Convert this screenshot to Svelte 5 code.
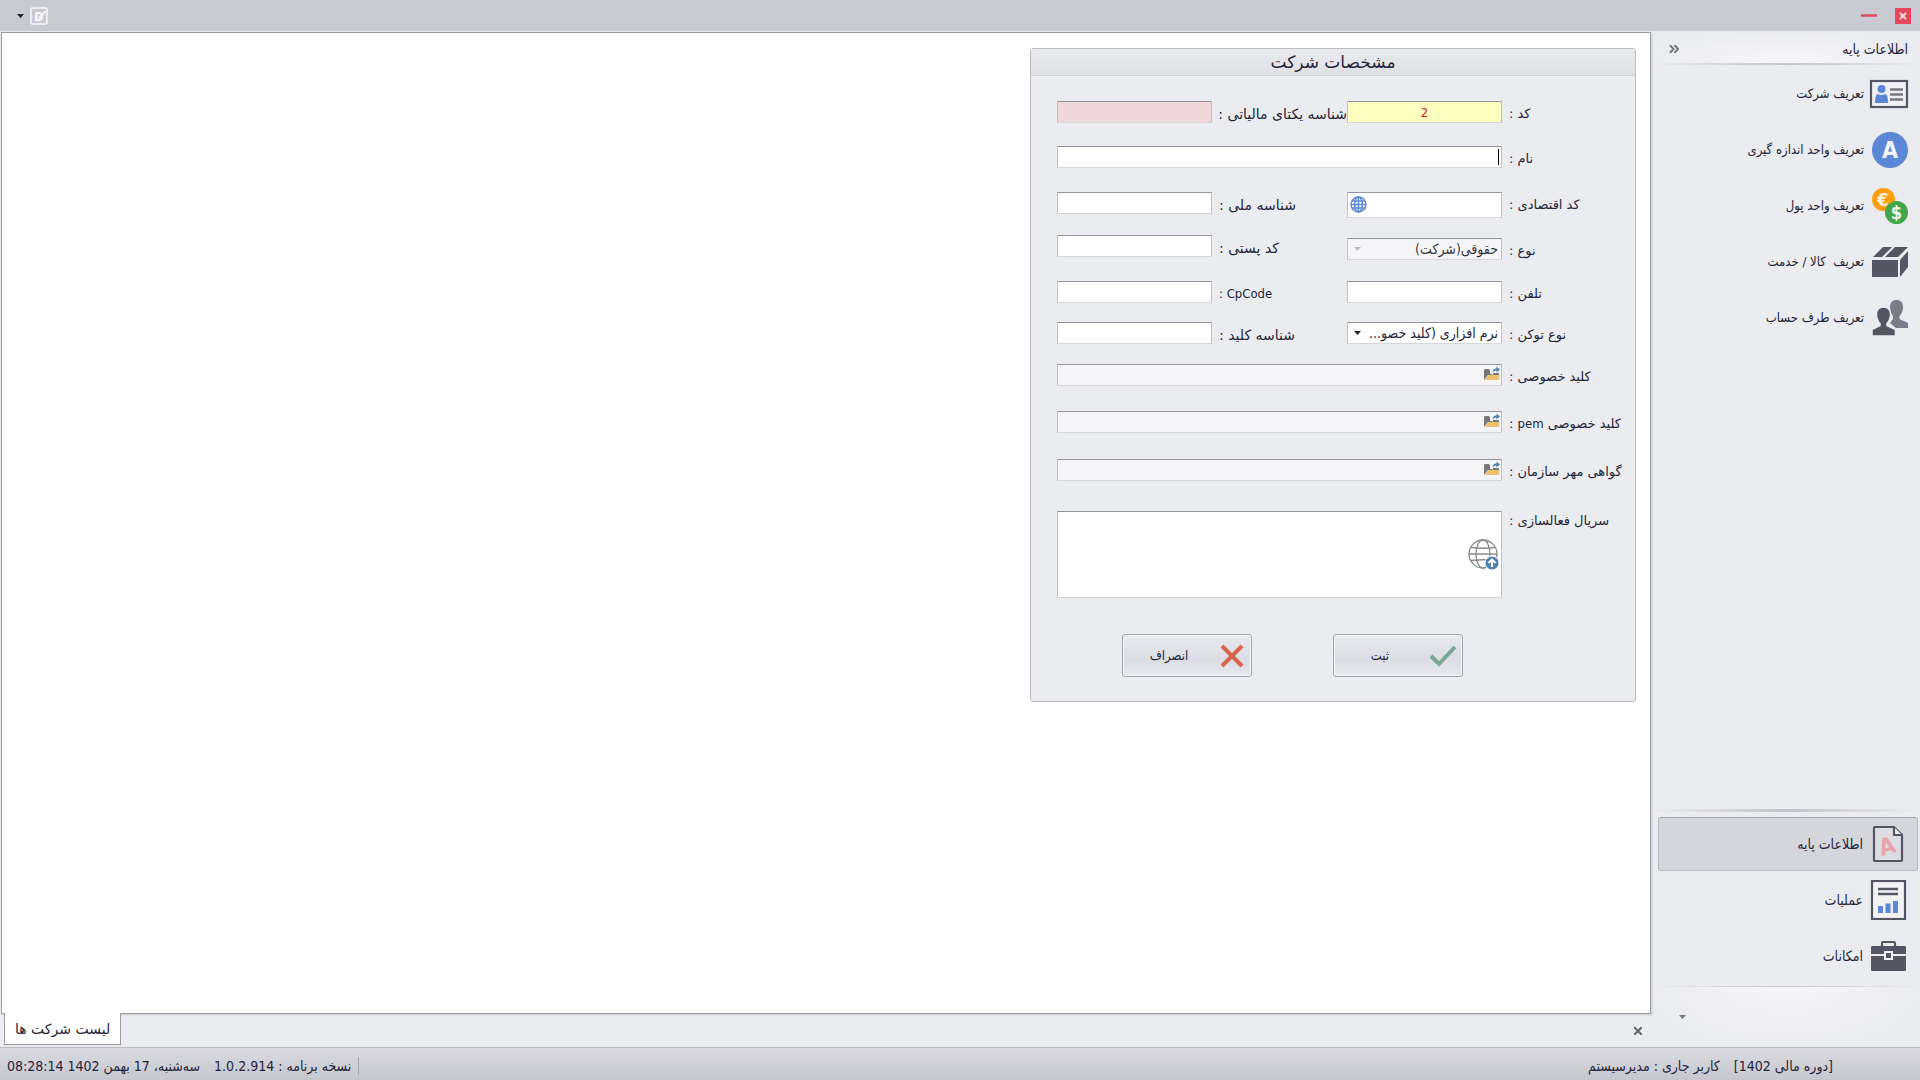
<script lang="ts">
	type Item = { label: string; icon: string };

	const baseItems: Item[] = [
		{ label: 'تعریف شرکت', icon: 'card' },
		{ label: 'تعریف واحد اندازه گیری', icon: 'unit' },
		{ label: 'تعریف واحد پول', icon: 'money' },
		{ label: 'تعریف \u00a0کالا / خدمت', icon: 'box' },
		{ label: 'تعریف طرف حساب', icon: 'people' }
	];

	const groups: Item[] = [
		{ label: 'اطلاعات پایه', icon: 'doc' },
		{ label: 'عملیات', icon: 'report' },
		{ label: 'امکانات', icon: 'case' }
	];

	let activeGroup = 'doc';
	let code = '2';
	let taxId = '';
	let name = '';
	let economicCode = '';
	let nationalId = '';
	let postalCode = '';
	let phone = '';
	let cpCode = '';
	let keyId = '';
	let serial = '';
</script>

{#snippet icon(id: string)}
	<svg class="icon" viewBox="0 0 40 40" aria-hidden="true">
		{#if id === 'card'}
			<rect x="2" y="7" width="36" height="26" fill="#f1f1f5" stroke="#555663" stroke-width="2.2" />
			<circle cx="12.5" cy="15" r="4" fill="#5b87d6" />
			<path d="M6 29q0-8 2.500-9 4 2 8 0 2.500 1 2.500 9z" fill="#5b87d6" />
			<path d="M21 15.500h13M21 20.500h13M21 25.500h13" stroke="#777884" stroke-width="2.4" />
		{:else if id === 'unit'}
			<circle cx="21" cy="20" r="18" fill="#5b87d6" />
			<text x="21" y="28" text-anchor="middle" font-size="23" font-weight="700" fill="#f4f6fb">A</text>
		{:else if id === 'money'}
			<circle cx="14.5" cy="13.5" r="11.5" fill="#ff9f10" />
			<text x="14" y="20" text-anchor="middle" font-size="18" font-weight="700" fill="#fff3df">€</text>
			<circle cx="27.5" cy="26.5" r="11.5" fill="#43a64c" />
			<text x="27.5" y="33" text-anchor="middle" font-size="18" font-weight="700" fill="#f2fbf2">$</text>
		{:else if id === 'box'}
			<path d="M3 18h26v17H3z" fill="#555663" />
			<path d="M31 18l8-9v16l-8 10z" fill="#555663" />
			<path d="M4 15L14 5h9L13 15zM16 15L26 5h13L29 15z" fill="#555663" />
		{:else if id === 'people'}
			<path d="M27.500 2c4 0 6.500 2.500 6.500 7 0 4-1.500 7-3.500 9v3l8.500 4v5H27l-6-5 3-4v-3c-2-2-3-5-3-9 0-4.500 2.500-7 6.500-7z" fill="#7b7c87" />
			<path d="M14.500 9c4.500 0 7 3 7 7.500 0 4-1.500 7-3.500 9v2l8.500 4V38H3v-6.500l8-4v-2c-2-2-3.500-5-3.500-9C7.500 12 10 9 14.500 9z" fill="#555663" stroke="#ebecf0" stroke-width="1.5" />
		{:else if id === 'doc'}
			<path d="M7 3h19l8 8v25q0 1-1 1H7q-1 0-1-1V4q0-1 1-1z" fill="#dcdce1" stroke="#555663" stroke-width="2.2" />
			<path d="M26 3v8h8" fill="#f0f0f3" stroke="#555663" stroke-width="2.2" />
			<text x="19" y="30" text-anchor="middle" font-size="23" font-weight="700" fill="#e8a3ae" transform="rotate(-16 19 22)">A</text>
		{:else if id === 'report'}
			<rect x="4" y="1" width="33" height="38" fill="#f3f3f6" stroke="#555663" stroke-width="2.2" />
			<path d="M10 9h20M10 14h20" stroke="#555663" stroke-width="2.4" />
			<path d="M10 26h5v7h-5zM17.500 23.500h5V33h-5zM25 21h5v12h-5z" fill="#5b87d6" />
		{:else if id === 'case'}
			<path d="M14 11V7.200q0-1.200 1-1.200h11q1 0 1 1.200V11" fill="none" stroke="#555663" stroke-width="2.2" />
			<path d="M4 10h33q1 0 1 1.500V18H3v-6.500Q3 10 4 10zM3 20h35v14q0 1-1 1H4q-1 0-1-1z" fill="#555663" />
			<rect x="16" y="15" width="9" height="9" fill="#f3f3f6" />
			<rect x="18" y="17" width="5" height="5" fill="#555663" />
		{/if}
	</svg>
{/snippet}

{#snippet folder()}
	<svg width="16" height="16" viewBox="0 0 16 16" aria-hidden="true">
		<path d="M0 4l1-1h4l1 1.500V8h3l-1 1H4l-4 5z" fill="#777" />
		<path d="M9 7h6v2H9z" fill="#777" />
		<path d="M4.500 9H16l-1.500 5H1z" fill="#edc06c" />
		<path d="M8.500 6.500C8.500 4 10 2.500 12.500 2.500V.500L16 3.500l-3.500 3v-2C11 4.500 10 5 8.500 6.500z" fill="#4e80b3" />
	</svg>
{/snippet}

<div class="app" dir="rtl">
	<header class="titlebar">
		<button class="close" aria-label="بستن">
			<svg width="16" height="16" viewBox="0 0 16 16"><rect width="16" height="16" fill="#e8475f" /><path d="M5 5l6 6M11 5l-6 6" stroke="#fbdde2" stroke-width="2" /></svg>
		</button>
		<button class="minimize" aria-label="کوچک کردن">
			<svg width="16" height="16" viewBox="0 0 16 16"><path d="M1 7.500h14" stroke="#e04a60" stroke-width="2.6" stroke-linecap="round" /></svg>
		</button>
		<span class="fill"></span>
		<svg width="18" height="18" viewBox="0 0 18 18" aria-hidden="true">
			<rect x="1" y="1" width="16" height="16" rx="1" fill="none" stroke="#f7f7fb" stroke-width="1.5" />
			<text x="4" y="14" font-size="13" font-weight="700" fill="#f7f7fb" direction="ltr">D</text>
			<path d="M9 11l7-7" stroke="#f7f7fb" stroke-width="2" />
		</svg>
		<button class="quick" aria-label="منو">
			<svg width="7" height="4" viewBox="0 0 7 4"><path d="M0 0h7L3.500 4z" fill="#222231" /></svg>
		</button>
	</header>

	<div class="main">
		<aside class="sidebar">
			<div class="side-head">
				<span>اطلاعات پایه</span>
				<button aria-label="جمع کردن">
					<svg width="10" height="8" viewBox="0 0 10 8"><path d="M1 0l3.500 4L1 8M5.500 0L9 4 5.500 8" fill="none" stroke="#777782" stroke-width="2" /></svg>
				</button>
			</div>
			<nav class="items">
				{#each baseItems as item}
					<button class="item">{@render icon(item.icon)}<span>{item.label}</span></button>
				{/each}
			</nav>
			<nav class="groups">
				{#each groups as item}
					<button class="item" class:active={item.icon === activeGroup} on:click={() => (activeGroup = item.icon)}>
						{@render icon(item.icon)}<span>{item.label}</span>
					</button>
				{/each}
			</nav>
			<div class="side-foot">
				<button aria-label="بیشتر">
					<svg width="7" height="4" viewBox="0 0 7 4"><path d="M0 0h7L3.500 4z" fill="#777782" /></svg>
				</button>
			</div>
		</aside>

		<div class="content">
			<main class="workspace">
				<form class="panel" on:submit|preventDefault>
					<h1>مشخصات شرکت</h1>
					<div class="fields">
						<label for="code">کد :</label>
						<input id="code" class="box code" bind:value={code} />
						<label class="second" for="tax">شناسه یکتای مالیاتی :</label>
						<input id="tax" class="box required" bind:value={taxId} />

						<label for="name">نام :</label>
						<div class="field wide">
							<input id="name" class="box" bind:value={name} />
							<span class="caret"></span>
						</div>

						<label for="economic">کد اقتصادی :</label>
						<div class="field">
							<input id="economic" class="box tall" bind:value={economicCode} />
							<svg class="globe" width="17" height="17" viewBox="0 0 17 17" aria-hidden="true">
								<g fill="none" stroke="#5b87d6" stroke-width="1.4">
									<circle cx="8.5" cy="8.5" r="7.5" />
									<ellipse cx="8.5" cy="8.5" rx="3.8" ry="7.5" />
									<path d="M8.500 1v15M1 8.500h15M2 5h13M2 12h13" />
								</g>
							</svg>
						</div>
						<label class="second" for="national">شناسه ملی :</label>
						<input id="national" class="box" bind:value={nationalId} />

						<label class="low" for="kind">نوع :</label>
						<div class="field low">
							<select id="kind" class="box" disabled><option>حقوقی(شرکت)</option></select>
							<svg class="arrow" width="7" height="4" viewBox="0 0 7 4"><path d="M0 0h7L3.500 4z" fill="#bbbbc2" /></svg>
						</div>
						<label class="second" for="postal">کد پستی :</label>
						<input id="postal" class="box" bind:value={postalCode} />

						<label for="phone">تلفن :</label>
						<input id="phone" class="box" bind:value={phone} />
						<label class="latin" for="cp">CpCode :</label>
						<input id="cp" class="box" bind:value={cpCode} />

						<label for="token">نوع توکن :</label>
						<div class="field">
							<select id="token" class="box"><option>نرم افزاری (کلید خصو...</option></select>
							<svg class="arrow" width="7" height="4" viewBox="0 0 7 4"><path d="M0 0h7L3.500 4z" fill="#222231" /></svg>
						</div>
						<label class="second" for="key">شناسه کلید :</label>
						<input id="key" class="box" bind:value={keyId} />

						<label for="private">کلید خصوصی :</label>
						<div class="field wide">
							<input id="private" class="box" disabled />
							<button type="button" class="browse" aria-label="انتخاب فایل">{@render folder()}</button>
						</div>

						<label for="pem">کلید خصوصی <span class="latin">pem</span> :</label>
						<div class="field wide">
							<input id="pem" class="box" disabled />
							<button type="button" class="browse" aria-label="انتخاب فایل">{@render folder()}</button>
						</div>

						<label for="stamp">گواهی مهر سازمان :</label>
						<div class="field wide">
							<input id="stamp" class="box" disabled />
							<button type="button" class="browse" aria-label="انتخاب فایل">{@render folder()}</button>
						</div>

						<label class="top" for="serial">سریال فعالسازی :</label>
						<div class="field wide">
							<textarea id="serial" class="box" bind:value={serial}></textarea>
							<button type="button" class="upload" aria-label="دریافت سریال">
								<svg width="32" height="32" viewBox="0 0 32 32">
									<g fill="none" stroke="#8a8a8a" stroke-width="1.3">
										<circle cx="15" cy="15" r="14" />
										<ellipse cx="15" cy="15" rx="7" ry="14" />
										<path d="M1 15h28M3 8.500q12 1.500 24 0M3 21.500q12-1.500 24 0" />
									</g>
									<circle cx="24" cy="24" r="7" fill="#4e80b3" stroke="#fff" stroke-width="1" />
									<path d="M24 28v-7M20.500 24l3.500-3.500 3.500 3.500" fill="none" stroke="#fff" stroke-width="2" />
								</svg>
							</button>
						</div>
					</div>
					<div class="actions">
						<button type="submit">
							<svg width="28" height="28" viewBox="0 0 28 28"><path d="M2 14l8 8L26 5" fill="none" stroke="#78a797" stroke-width="4" /></svg>
							<span>ثبت</span>
						</button>
						<button type="button">
							<svg width="28" height="28" viewBox="0 0 28 28"><path d="M4 4l20 20M24 4L4 24" fill="none" stroke="#d9664a" stroke-width="4" /></svg>
							<span>انصراف</span>
						</button>
					</div>
				</form>
			</main>
			<div class="tabs">
				<button class="tab-close" aria-label="بستن تب">
					<svg width="8" height="8" viewBox="0 0 8 8"><path d="M0 0l8 8M8 0L0 8" stroke="#666672" stroke-width="2" /></svg>
				</button>
				<button class="tab">لیست شرکت ها</button>
			</div>
		</div>
	</div>

	<footer class="status">
		<span>[دوره مالی 1402]</span>
		<span>کاربر جاری : مدیرسیستم</span>
		<span class="fill"></span>
		<span class="version">نسخه برنامه : 1.0.2.914</span>
		<span>سه‌شنبه، 17 بهمن 1402 08:28:14</span>
	</footer>
</div>

<style>
	:global(body) {
		background: #ebecf0;
	}

	.app {
		display: flex;
		flex-direction: column;
		min-height: 100vh;
		font-family: 'DejaVu Sans Condensed', 'DejaVu Sans', sans-serif;
		font-size: 14px;
		line-height: 18px;
		color: #25253a;
	}

	.app * {
		box-sizing: border-box;
	}

	button,
	input,
	select,
	textarea {
		font: inherit;
		color: inherit;
	}

	button {
		display: flex;
		align-items: center;
		padding: 0;
		border: 0;
		background: none;
	}

	svg {
		display: block;
		flex: none;
	}

	.fill {
		flex: 1;
	}

	.titlebar {
		display: flex;
		align-items: center;
		height: 31px;
		padding: 0 9px 0 17px;
		background: #c9c9d2;
	}

	.minimize {
		margin-right: 18px;
	}

	.quick {
		margin-right: 6px;
	}

	.main {
		display: flex;
		flex: 1;
	}

	.sidebar {
		display: flex;
		flex-direction: column;
		width: 268px;
	}

	.side-head {
		display: flex;
		justify-content: space-between;
		align-items: center;
		height: 34px;
		padding: 3px 12px 0 17px;
		background: radial-gradient(ellipse at 50% 100%, #f7f7fb, #ebecf0 70%);
		border-bottom: 2px solid;
		border-image: linear-gradient(to right, #ebecf0, #c2c2ca, #ebecf0) 1;
	}

	.items {
		display: flex;
		flex-direction: column;
		margin-top: 1px;
		padding-right: 11px;
		font-size: 13px;
	}

	.item {
		gap: 5px;
		height: 56px;
		white-space: pre;
	}

	.icon {
		width: 40px;
		height: 40px;
	}

	.groups {
		display: flex;
		flex-direction: column;
		gap: 2px;
		margin-top: auto;
		padding: 5px 2px 3px 6px;
		border-top: 3px double;
		border-bottom: 1px solid;
		border-image: linear-gradient(to right, #ebecf0, #c2c2ca, #ebecf0) 1;
	}

	.groups .item {
		height: 54px;
		padding-right: 9px;
		border: 1px solid transparent;
		border-radius: 3px;
	}

	.groups .active {
		background: #d5d6dc;
		border-color: #a2a2ac #b9b9c2 #b9b9c2;
	}

	.side-foot {
		height: 60px;
		padding: 28px 0 0 27px;
		background: radial-gradient(ellipse at 50% 0, #f5f5f9, #ebecf0 70%);
	}

	.side-foot button {
		margin-right: auto;
	}

	.content {
		display: flex;
		flex: 1;
		flex-direction: column;
		min-width: 0;
	}

	.workspace {
		flex: 1;
		margin: 1px 1px 0;
		padding: 15px 14px;
		background: #fff;
		border: 1px solid #9a9aa3;
		box-shadow: 1px 1px 2px #c6c6cd;
	}

	.panel {
		width: 606px;
		background: #ebecf0;
		border: 1px solid #bcbcc5;
		border-radius: 3px;
	}

	h1 {
		height: 27px;
		margin: 0;
		font-family: 'DejaVu Sans', sans-serif;
		font-size: 17px;
		font-weight: 400;
		line-height: 27px;
		text-align: center;
		background: linear-gradient(#e9eaed, #e0e1e5);
		border-bottom: 1px solid #cfcfd5;
	}

	.fields {
		display: grid;
		grid-template-columns: 1fr 155px 135px 155px;
		grid-template-rows: 45px 46px 43px 46px 41px 42px 47px 48px 52px 87px;
		padding: 25px 0 0 26px;
	}

	label {
		display: block;
		height: 26px;
		padding-left: 7px;
		font-family: 'DejaVu Sans', sans-serif;
		font-size: 13px;
		line-height: 26px;
		text-align: left;
		white-space: nowrap;
	}

	.second {
		font-size: 14px;
	}

	.latin {
		font-family: 'DejaVu Sans Condensed', sans-serif;
	}

	.top {
		line-height: 20px;
	}

	.field {
		position: relative;
	}

	.wide {
		grid-column: span 3;
	}

	.low {
		margin-top: 3px;
	}

	.box {
		display: block;
		width: 100%;
		height: 22px;
		margin: 0;
		padding: 0 3px;
		background: #fff;
		border: 1px solid #c0c0c8;
		border-top-color: #93939d;
		border-bottom-color: #d5d5da;
		border-radius: 0;
		outline: none;
		appearance: none;
		resize: none;
		opacity: 1;
	}

	.box:disabled {
		background: #f5f5f7;
		color: #33333f;
	}

	.tall {
		height: 26px;
	}

	.code {
		font-size: 13px;
		text-align: center;
		color: #d21414;
		background: #ffffc0;
	}

	.required {
		background: #f0d8da;
	}

	textarea.box {
		height: 87px;
	}

	.caret {
		position: absolute;
		top: 3px;
		right: 3px;
		width: 1px;
		height: 16px;
		background: #000;
	}

	.globe {
		position: absolute;
		top: 4px;
		left: 3px;
	}

	.arrow {
		position: absolute;
		top: 9px;
		left: 7px;
	}

	.browse {
		position: absolute;
		top: 2px;
		right: 2px;
	}

	.upload {
		position: absolute;
		top: 28px;
		right: 2px;
	}

	.actions {
		display: flex;
		gap: 81px;
		padding: 36px 172px 24px 0;
		font-size: 13px;
	}

	.actions button {
		width: 130px;
		height: 43px;
		padding: 0 5px;
		background: linear-gradient(#e9eaee, #dcdde4 60%, #e8e9ee);
		border: 1px solid #a5a5af;
		border-radius: 3px;
		box-shadow: inset 0 0 0 1px #f4f4f7;
	}

	.actions span {
		flex: 1;
		padding-right: 8px;
		text-align: center;
	}

	.tabs {
		display: flex;
		justify-content: space-between;
		height: 33px;
		padding: 0 10px 0 4px;
	}

	.tab {
		height: 32px;
		margin-top: -1px;
		padding: 0 10px;
		font-family: 'DejaVu Sans', sans-serif;
		background: #fff;
		border: 1px solid #9a9aa3;
		border-top: 0;
	}

	.status {
		display: flex;
		align-items: center;
		gap: 14px;
		height: 33px;
		padding: 3px 87px 0 7px;
		background: linear-gradient(#dadae0, #c6c6ce);
		border-top: 1px solid #bcbcc5;
	}

	.version {
		padding-right: 7px;
		border-right: 1px solid #a5a5af;
	}
</style>
